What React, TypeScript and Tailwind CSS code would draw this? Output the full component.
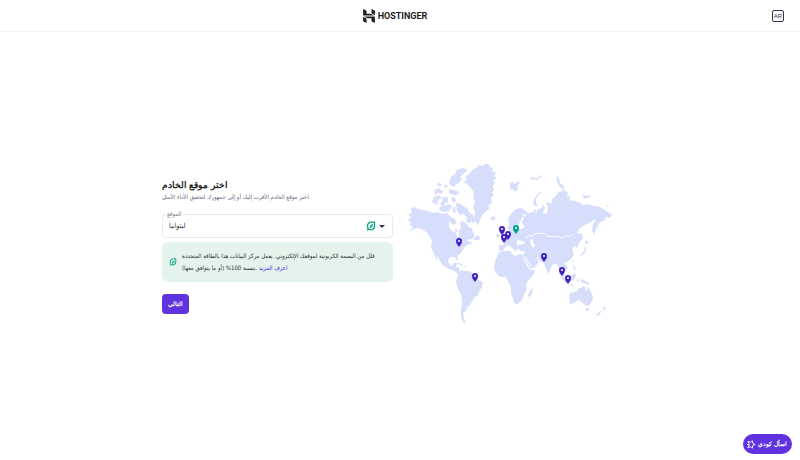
import React, { useState } from 'react';

interface Pin {
  x: number;
  y: number;
  active?: boolean;
}

const PINS: Pin[] = [
  { x: 459, y: 247 },
  { x: 475, y: 282 },
  { x: 502, y: 235 },
  { x: 508, y: 240 },
  { x: 504, y: 243 },
  { x: 516, y: 234, active: true },
  { x: 544, y: 262 },
  { x: 562, y: 276 },
  { x: 568, y: 284 },
];

const LAND = [
  // North America
  'M411 209L414 207L418 209L423 210L428 211L433 213L438 212L442 214L447 213L450 216L452 218L449 222L449 227L452 231L456 233L457 237L459 236L459 231L461 228L460 223L463 221L467 224L469 228L471 227L473 232L475 236L472 239L467 240L469 242L472 242L471 244L467 245L464 248L462 251L460 254L457 256L458 260L456 260L455 257L450 257L448 260L449 264L452 266L454 263L457 263L456 267L459 268L459 272L462 273L458 274L454 271L449 269L444 266L441 263L438 257L436 255L438 261L436 259L433 252L431 247L432 241L430 237L426 232L421 229L417 228L412 230L409 232L413 227L410 225L411 222L408 220L411 217L408 214L412 213z',
  // Greenland
  'M463 182L467 180L465 177L469 174L472 170L476 168L479 165L483 166L484 164L489 164L490 167L493 168L492 171L497 173L494 175L496 178L493 180L495 183L493 186L494 190L492 192L494 195L491 198L492 202L488 206L490 208L485 212L482 215L480 220L478 225L475 221L474 216L475 212L473 207L475 202L473 198L474 193L471 188L467 184z',
  // Arctic islands
  'M449 182L451 177L455 174L457 170L462 168L466 169L467 171L463 174L460 177L462 179L459 183L456 184L454 187L450 185zM449 189l5 1 5 2-1 3-4 0-5-2zM438 188l5 3-1 3-4-1-4 2 1-4zM434 197l5-2 3 3-4 2-1 5-5-3zM443 197l5 0 0 5-3 1-1 3-4-1 2-4zM440 207l5-2 3 1 2 5-6 1-5-2zM451 198l3-1 2 4-3 2zM447 204l4 1 1 4-4-1zM456 203l5 1 3 3 3 1 3 5 3 2 2 5-1 3-3-2-1 3-4-3 1-3-3-4-4 1-3-4zM453 207l2 0 1 6-3-1zM450 218l4 0 3 5-4 2-3-3zM455 229l3 1-1 2-3-1zM437 184l3-1 2 2-3 2zM444 185l4 0-1 3-3-1zM434 190l3 0-2 3z',
  'M474 238l4-3 2 3-1 2-5 0zM491 217l3-1 2 2-2 2-3 0zM454 263l5 0 4 2-1 1-4-2-4 0zM464 266l3 0-1 1z',
  // South America
  'M459 272L461 270L464 271L469 271L473 274L476 275L477 279L483 282L482 287L480 290L478 295L474 298L472 302L469 306L467 307L466 311L463 313L464 318L466 323L463 322L461 317L461 311L462 302L461 294L458 289L456 282z',
  // Africa
  'M499 252L505 251L511 251L512 254L516 256L519 254L523 255L524 260L527 266L530 270L535 270L534 274L528 281L526 285L527 290L524 294L522 300L518 304L515 304L513 299L511 293L511 287L508 281L506 277L500 277L496 273L494 268L495 261zM533 288L532 294L529 298L528 294L530 291z',
  // Europe and Asia
  'M499 251L499 245L504 245L503 241L506 239L510 236L510 232L508 229L509 224L508 219L511 214L516 209L521 208L525 210L528 213L525 215L522 213L524 217L528 213L533 212L535 208L536 213L538 209L542 208L543 204L545 208L543 213L547 214L548 207L546 203L549 202L551 205L552 199L556 196L558 192L563 191L562 188L565 191L568 192L567 196L571 197L569 200L575 201L580 203L583 205L588 204L593 206L600 207L605 210L612 215L610 218L606 217L604 221L600 222L597 227L594 235L592 230L593 224L596 219L591 222L585 225L579 229L577 233L582 234L583 238L579 243L577 248L574 246L572 249L574 254L571 259L567 262L564 263L568 268L565 271L562 268L560 264L562 270L565 277L561 274L558 266L555 263L551 267L549 274L546 269L544 263L538 260L535 257L539 262L535 267L530 269L527 263L523 256L525 251L520 251L517 247L518 251L514 250L509 245L505 247L503 251z',
  // British Isles and polar islands
  'M500 230l3-2 1 5 2 3-1 2-4 1 1-4zM497 234l3 0-1 3-3 0zM510 183l3-1 2 2 4-3 1 2-3 3 1 3-3 3-2-3-3 0zM530 178l4-1 2 2 5-4 1 1-5 4-7-1zM542 192l-4 3-2 4 0 4 2 3-4 0-1-4 3-6 3-4zM556 176l3 2 1 5 4 3 0 3-4-2-3-5zM582 195l4 1 4-1 0 2-6 2zM606 205l3 1-2 1z',
  // Pacific islands
  'M585 240l3 2 1 1-4 1zM585 246l1 4-2 4-4 2 1-2 3-3zM572 258l1 3-1 1zM573 264l2 3 1 4-2-1zM559 272l4 4 4 6-1 1-5-5zM568 284l6 1-1 1-5-1zM570 276l5-3 1 3-3 5-3-1zM578 277l1 5-2 0zM580 279l4 1 6 4-2 1-3-2-3 0z',
  // Australia and New Zealand
  'M569 294L574 292L577 291L579 288L581 288L583 286L586 287L585 290L587 291L588 286L590 290L592 294L593 299L590 305L586 306L582 302L578 300L574 303L570 304zM586 308l3 0-1 3-2 0zM604 306l2 2-2 3-1-2zM602 311l-4 5-2-1 4-4z',
];

const WATER = [
  'M519 229l-1-3 2-4 2-5 2 0-2 5 1 3 2 1-3 3z',
  'M516 243l2-3 4 1 3 1-1 2-6 1z',
  'M530 240l3-1 0 3 2 4-2 2-2-3z',
];

const Leaf: React.FC<{ className: string }> = ({ className }) => (
  <svg viewBox="0 0 20 20" fill="none" stroke="#00a37c" strokeWidth="2.5" className={className} aria-hidden="true">
    <path d="M2 18.500l3-2.500Q3 14 3 10.500 3 2 11 2h6v7q0 8.500-7 8.500-3 0-5-1.500" />
    <path d="M8 13q-1-5 5-6 0 7-5 6z" strokeWidth="2" />
  </svg>
);

const Logo: React.FC = () => (
  <div className="flex items-center gap-[3px]" dir="ltr">
    <svg viewBox="2 0 20.200 24" className="h-[14px] w-3 fill-[#1d1e20]" aria-hidden="true">
      <path d="M16.400 0v7.200l5.800 3.300V2.900zM2 0v11.200h18.800l-5.900-3.100h-7V3zM16.400 20.900v-5H9.300l-6-3.200h18.900V24zM2 13.400v7.400l5.900 3.200v-7.200z" />
    </svg>
    <span className="font-['Roboto',sans-serif] text-[9px] leading-3 font-bold text-[#1d1e20]">HOSTINGER</span>
  </div>
);

const WorldMap: React.FC = () => (
  <svg viewBox="407 164 206 162" className="w-[206px] shrink-0" role="img" aria-label="خريطة الخوادم">
    {LAND.map((d) => (
      <path key={d} d={d} fill="#d7defc" />
    ))}
    {WATER.map((d) => (
      <path key={d} d={d} fill="#fff" />
    ))}
    <path
      d="M526 238l4-3 2 1 5-3 3 1 4-1 3 3 6 1 4-1 5 2 5-2 3 1 2-3M525 256l3 6 3 5M537 257l3 4"
      fill="none"
      stroke="#fff"
      strokeWidth="1"
    />
    {PINS.map((p) => (
      <g key={`${p.x}-${p.y}`} transform={`translate(${p.x} ${p.y})`}>
        <path d="M0 0C-1-2-3-3-3-6a3 3 0 0 1 6 0C3-3 1-2 0 0z" fill={p.active ? '#00a08a' : '#4322c4'} />
        <circle cx="0" cy="-6" r="1" fill="#fff" />
      </g>
    ))}
  </svg>
);

export default function App() {
  const [location, setLocation] = useState('lt');

  return (
    <div className="flex min-h-screen flex-col bg-white font-['DejaVu_Sans_Condensed','DejaVu_Sans',sans-serif] text-[#1d1e20]">
      <header className="grid h-8 grid-cols-3 items-center border-b border-gray-100 px-4">
        <span />
        <div className="flex justify-center pr-2.5">
          <Logo />
        </div>
        <button className="h-3 w-3 justify-self-end rounded-xs border border-[#36344d] font-['Liberation_Sans',sans-serif] text-[6px] leading-[10px] text-[#36344d]">
          AR
        </button>
      </header>

      <main className="mx-auto flex w-full max-w-[476px] flex-1 items-center gap-[14px] pb-0.5">
        <section className="w-[231px] pt-0.5">
          <h1 className="font-['Noto_Sans',sans-serif] text-[9px] leading-[14px] font-bold">اختر موقع الخادم</h1>
          <p className="text-[6px] leading-[10px] whitespace-nowrap text-[#65687a]">
            اختر موقع الخادم الأقرب إليك أو إلى جمهورك لتحقيق الأداء الأمثل.
          </p>

          <div className="relative mt-3">
            <label htmlFor="location" className="absolute -top-1 left-1 bg-white px-px text-[6px] leading-2 text-[#727586]">
              الموقع
            </label>
            <select
              id="location"
              value={location}
              onChange={(e) => setLocation(e.target.value)}
              className="block h-6 w-full appearance-none rounded-sm border border-[#e9eaef] bg-transparent pl-[6px] text-[7px] text-[#2f3036]"
            >
              <option value="lt">ليتوانيا</option>
            </select>
            <div className="pointer-events-none absolute inset-y-0 right-2 flex items-center gap-[3px]">
              <Leaf className="h-[10px] w-[10px]" />
              <svg viewBox="0 0 6 3" className="w-[6px] fill-[#36344d]" aria-hidden="true">
                <path d="M0 0h6L3 3z" />
              </svg>
            </div>
          </div>

          <div className="mt-1 flex items-center gap-1 rounded-md bg-[#e4f4ed] py-2 pr-2 pl-[7px]">
            <Leaf className="h-2 w-2 shrink-0" />
            <p className="flex-1 pl-px text-[6px] leading-3 whitespace-nowrap text-[#2b2d33]">
              قلل من البصمة الكربونية لموقعك الإلكتروني. يعمل مركز البيانات هذا بالطاقة المتجددة
              <br />
              بنسبة 100% (أو ما يتوافق معها).{' '}
              <a href="#learn-more" className="inline-block text-[#4318d1]">
                اعرف المزيد
              </a>
            </p>
          </div>

          <button className="mt-3 h-5 w-[27px] rounded-sm bg-[#6033e0] font-['Noto_Sans',sans-serif] text-[6px] font-bold text-white">
            التالي
          </button>
        </section>
        <WorldMap />
      </main>

      <button className="fixed right-2 bottom-[6px] flex h-5 items-center gap-0.5 rounded-full bg-[#6033e0] pr-[5px] pl-1 font-['Noto_Sans',sans-serif] text-[6px] font-bold text-white">
        <svg viewBox="0 0 20 20" fill="none" stroke="currentColor" strokeWidth="2" strokeLinejoin="round" strokeLinecap="round" className="h-[9px] w-[9px]" aria-hidden="true">
          <path d="M5 9L2 3l6 2 4-3 1 6 5 2-5 2-1 6-4-3-6 2 3-6M1 10h3" />
        </svg>
        اسأل كودي
      </button>
    </div>
  );
}
